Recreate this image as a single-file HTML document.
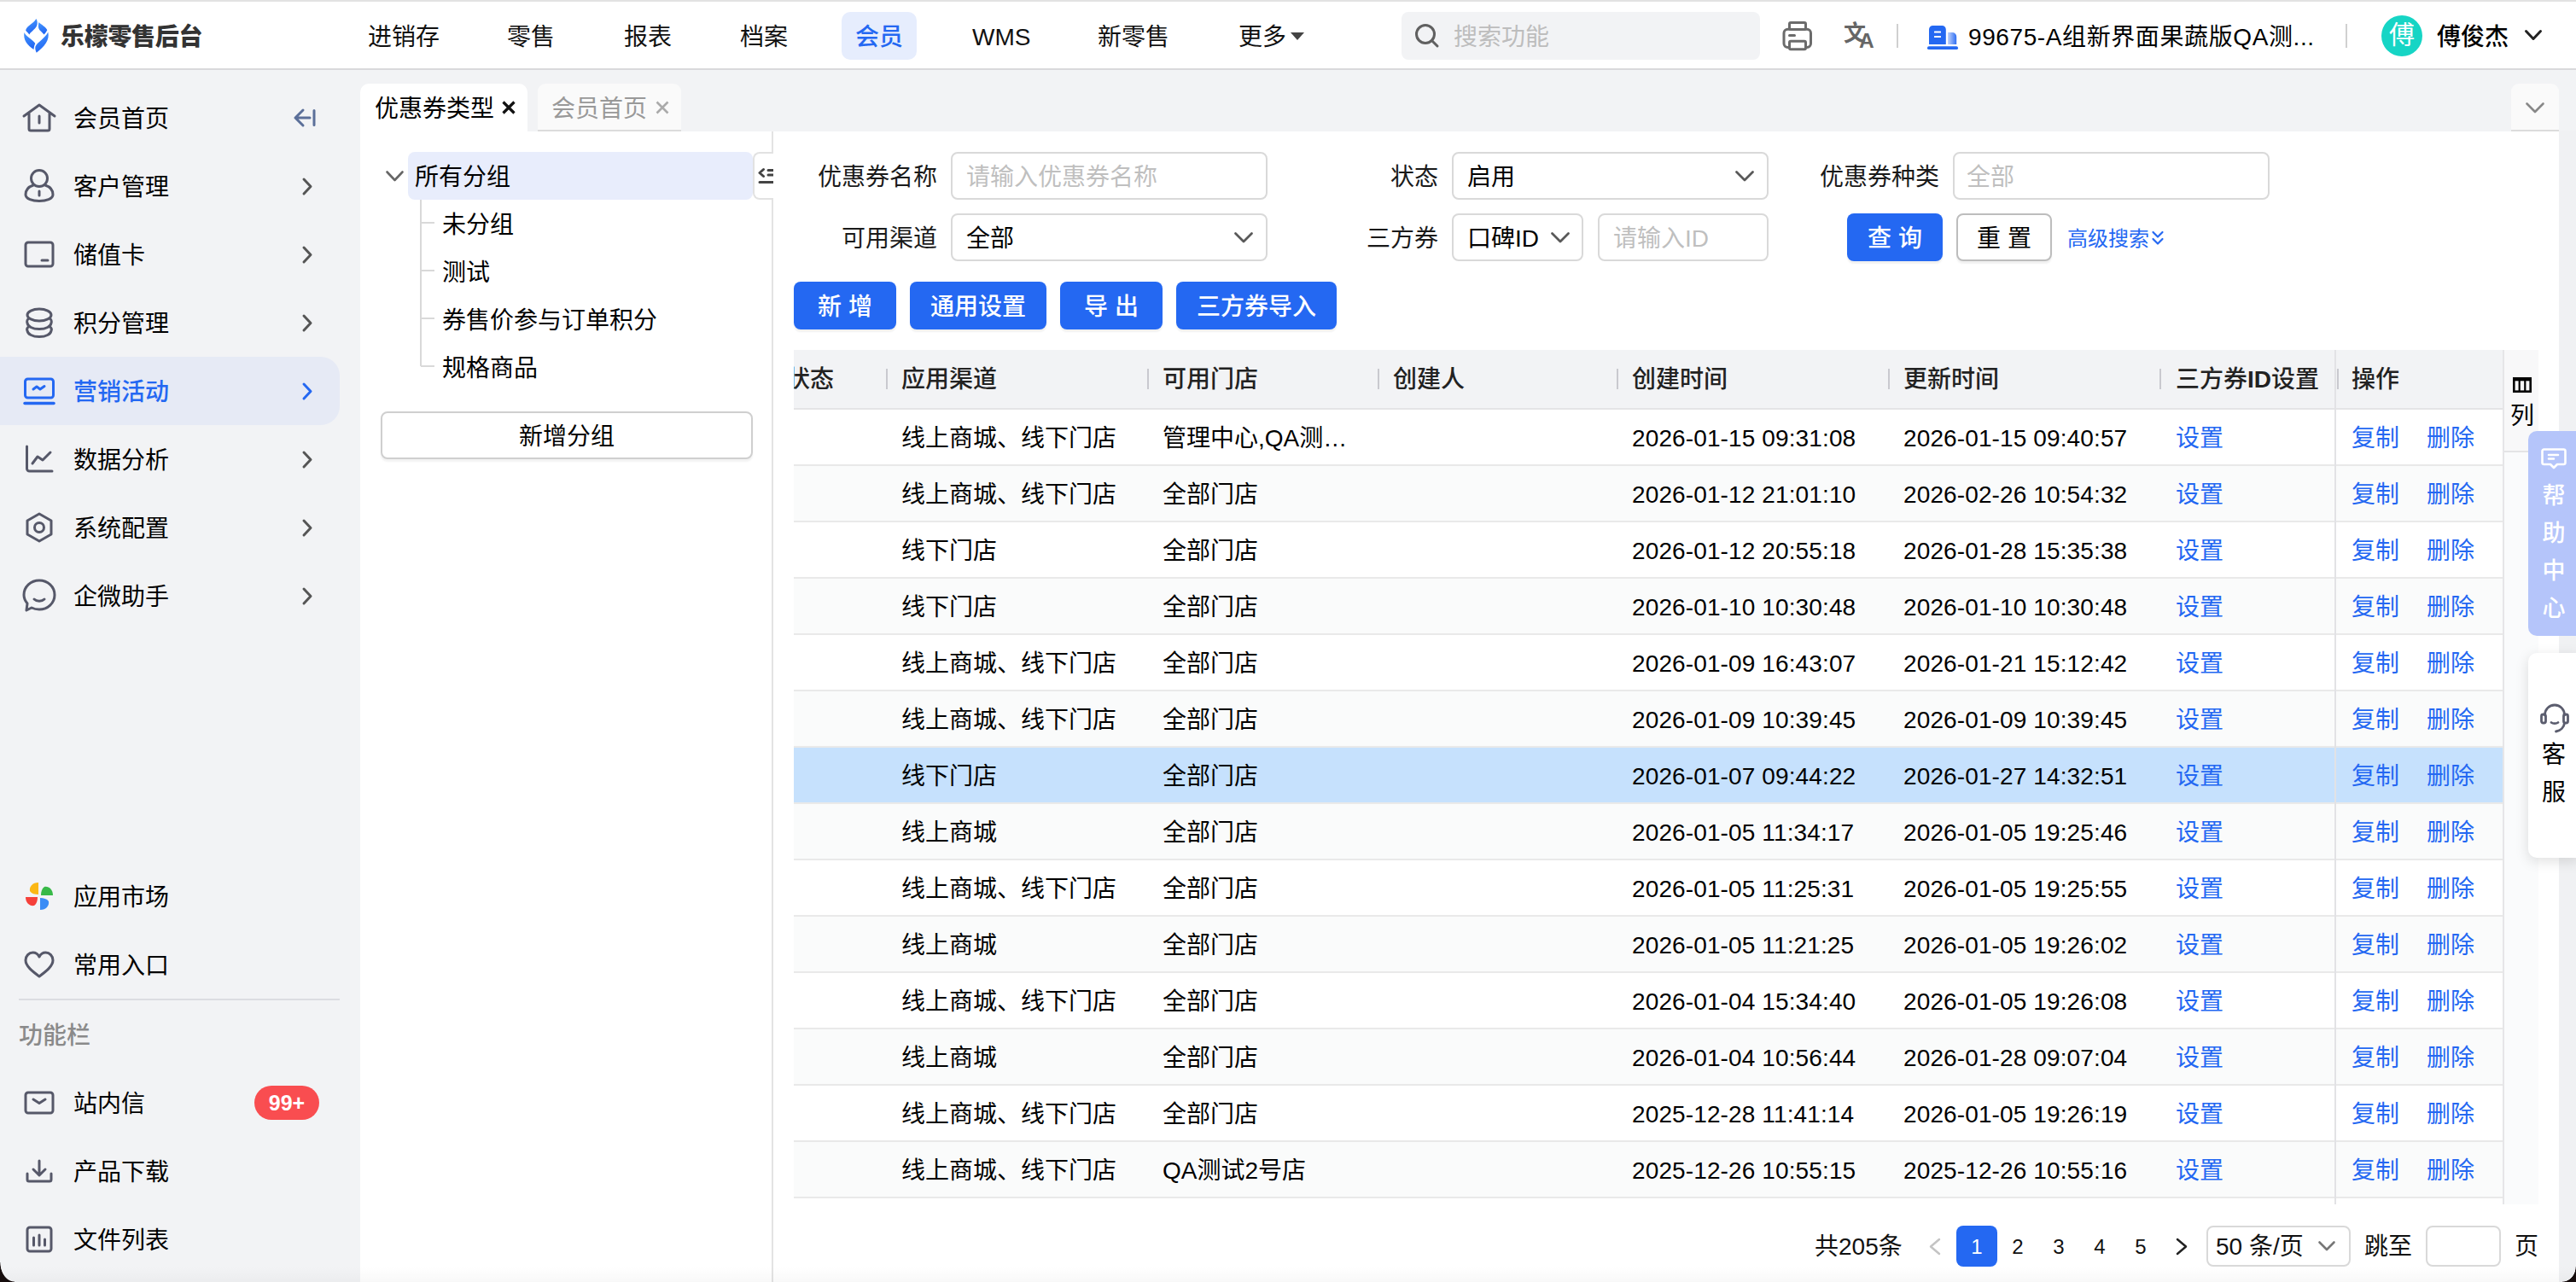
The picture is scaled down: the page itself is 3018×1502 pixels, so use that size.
<!DOCTYPE html>
<html lang="zh-CN">
<head>
<meta charset="utf-8">
<title>乐檬零售后台</title>
<style>
*{box-sizing:border-box;margin:0;padding:0}
html,body{width:3018px;height:1502px;overflow:hidden;background:#f2f3f5}
body{position:relative;font-family:"Liberation Sans","Noto Sans CJK SC",sans-serif;font-size:28px;color:#000;line-height:1}
.abs{position:absolute}
.t{position:absolute;white-space:nowrap;line-height:40px;height:40px;margin-top:2px}
svg{position:absolute;overflow:visible}
/* header */
#topstrip{left:0;top:0;width:3018px;height:2px;background:#e2e2e2}
#header{left:0;top:2px;width:3018px;height:78px;background:#fff}
#hline{left:0;top:80px;width:3018px;height:2px;background:#d9d9db}
.nav{font-size:28px;color:#111}
/* sidebar */
.sb{font-size:28px;color:#000;left:86px}
.chev{left:352px}
/* content */
#panel{left:422px;top:154px;width:2576px;height:1348px;background:#fff}
.lbl{font-size:28px;color:#1a1a1a;text-align:right}
.inp{position:absolute;height:56px;border:2px solid #d9d9d9;border-radius:8px;background:#fff;font-size:28px;line-height:56px;padding-left:16px;white-space:nowrap;color:#000}
.ph{color:#bfbfbf}
.th{font-weight:500;color:#222}.th b{font-weight:700}
.dt{letter-spacing:0.12px}
.lk{color:#2468f2}
.btn{position:absolute;font-weight:500;height:56px;border-radius:8px;background:#2468f2;color:#fff;font-size:28px;line-height:60px;text-align:center;white-space:nowrap;box-shadow:0 3px 2px rgba(0,0,0,.06)}
</style>
</head>
<body>
<div class="abs" id="topstrip"></div>
<div class="abs" id="header"></div>
<div class="abs" id="hline"></div>

<!-- HEADER-CONTENT -->
<svg id="logo" style="left:28px;top:22px" width="30" height="40" viewBox="0 0 30 40">
<defs><linearGradient id="lg1" x1="0" y1="0" x2="0.300" y2="1"><stop offset="0" stop-color="#4a9bff"/><stop offset="1" stop-color="#2267f3"/></linearGradient>
<linearGradient id="lg2" x1="0" y1="0" x2="0.300" y2="1"><stop offset="0" stop-color="#4596fd"/><stop offset="1" stop-color="#2369f4"/></linearGradient></defs>
<path d="M14.300 0 C15.800 2 15.800 4.500 15.600 6.500 C14.500 12 9 14 6.300 18.400 C5 16.500 3 15 2.100 13.500 C3.500 8 11.500 5.500 14.300 0Z" fill="url(#lg1)"/>
<path d="M17.500 3.900 C20.500 7 26 9.500 27.300 13.300 C26.500 15 25 17 23.600 18.400 C21.500 15.500 17.800 13.500 17.100 10.400 C16.800 8 17 6 17.500 3.900Z" fill="url(#lg1)"/>
<path d="M0.400 16 C3 21.500 10.500 24 13.300 29 C12.300 31 11.700 33.500 11.500 36 C4 31 -1 25 0.400 16Z" fill="url(#lg2)"/>
<path d="M28.300 15.600 C30.500 25 24 33 14.800 39.800 C13.600 37.500 13 35 13.400 32.800 C15.500 27.500 25 23 28.300 15.600Z" fill="url(#lg2)"/>
</svg>
<div class="t " style="left:71px;top:22px;font-weight:900;font-size:28px;color:#333;letter-spacing:-0.3px">乐檬零售后台</div>
<div class="abs" style="left:986px;top:14px;width:88px;height:56px;border-radius:10px;background:#e6edfd"></div>
<div class="t nav" style="left:431px;top:22px;">进销存</div>
<div class="t nav" style="left:594px;top:22px;">零售</div>
<div class="t nav" style="left:731px;top:22px;">报表</div>
<div class="t nav" style="left:867px;top:22px;">档案</div>
<div class="t nav" style="left:1139px;top:22px;">WMS</div>
<div class="t nav" style="left:1286px;top:22px;">新零售</div>
<div class="t nav" style="left:1451px;top:22px;">更多</div>
<div class="t nav" style="left:1002px;top:22px;color:#2468f2;font-weight:500">会员</div>
<div class="abs" style="left:1512px;top:38px;width:0;height:0;border-left:8.5px solid transparent;border-right:8.5px solid transparent;border-top:9px solid #444"></div>
<div class="abs" style="left:1642px;top:14px;width:420px;height:56px;border-radius:8px;background:#f2f3f5"></div>
<svg style="left:1657px;top:27px" width="30" height="30" viewBox="0 0 30 30" fill="none" stroke="#606060" stroke-width="3"><circle cx="13" cy="13" r="10.5"/><path d="M20.5 20.5L27 27" stroke-linecap="round"/></svg>
<div class="t " style="left:1703px;top:22px;color:#bdbdbd;font-size:28px">搜索功能</div>
<svg style="left:2088px;top:24px" width="36" height="36" viewBox="0 0 36 36" fill="none" stroke="#6b6b6b" stroke-width="3" stroke-linejoin="round">
<rect x="2" y="10.300" width="31.500" height="21.200" rx="4.500"/>
<rect x="8.500" y="2.500" width="19" height="8" rx="1.500" fill="#fff"/>
<rect x="8.500" y="24.300" width="19" height="9.400" rx="1.500" fill="#fff"/>
<path d="M8.500 17.500h6" stroke-linecap="round"/></svg>
<div class="t" style="left:2160px;top:23px;font-size:26px;font-weight:700;color:#666;line-height:28px;height:28px">文</div>
<div class="t" style="left:2178px;top:32px;font-size:24.500px;font-weight:700;color:#666;line-height:28px;height:28px">A</div>
<div class="abs" style="left:2222px;top:28px;width:2px;height:28px;background:#d0d0d0"></div>
<svg style="left:2258px;top:30px" width="36" height="28" viewBox="0 0 36 28">
<defs><linearGradient id="bg2" x1="0" y1="0" x2="1" y2="0"><stop offset="0" stop-color="#c3d4fb"/><stop offset="1" stop-color="#2e6ef3"/></linearGradient></defs>
<path d="M2 4.500a4.500 4.500 0 0 1 4.500-4.500h10.800a4.500 4.500 0 0 1 4.500 4.500v17.500H2z" fill="#2468f2"/>
<path d="M24 8h5.200a5 5 0 0 1 5 5v9H24z" fill="url(#bg2)"/>
<rect x="0" y="24.300" width="36" height="3.700" rx="1.850" fill="#2468f2"/>
<rect x="8" y="6.500" width="8" height="2" rx="0.500" fill="#fff"/><rect x="8" y="12" width="8" height="2" rx="0.500" fill="#fff"/></svg>
<div class="t " style="left:2306px;top:22px;font-size:28px;color:#000;letter-spacing:0.6px">99675-A组新界面果蔬版QA测...</div>
<div class="abs" style="left:2748px;top:28px;width:2px;height:28px;background:#d0d0d0"></div>
<div class="abs" style="left:2790px;top:18px;width:48px;height:48px;border-radius:50%;background:#16d5c5;color:#fff;font-size:30px;line-height:46px;text-align:center">傅</div>
<div class="t " style="left:2855px;top:22px;font-weight:500;color:#000">傅俊杰</div>
<svg style="left:2958px;top:35px" width="20" height="13" viewBox="0 0 20 13" fill="none" stroke="#222" stroke-width="3" stroke-linecap="round" stroke-linejoin="round"><path d="M1.5 1.5L10 10.5L18.5 1.5"/></svg>

<!-- SIDEBAR -->
<div class="abs" style="left:0;top:418px;width:398px;height:80px;border-radius:0 22px 22px 0;background:#e6eaf5"></div>
<div class="t sb" style="left:86px;top:118px;">会员首页</div>
<div class="t sb" style="left:86px;top:198px;">客户管理</div>
<svg style="left:354px;top:208px" width="12" height="21" viewBox="0 0 12 21" fill="none" stroke="#555" stroke-width="3" stroke-linecap="round" stroke-linejoin="round"><path d="M2 2L10 10.500L2 19"/></svg>
<div class="t sb" style="left:86px;top:278px;">储值卡</div>
<svg style="left:354px;top:288px" width="12" height="21" viewBox="0 0 12 21" fill="none" stroke="#555" stroke-width="3" stroke-linecap="round" stroke-linejoin="round"><path d="M2 2L10 10.500L2 19"/></svg>
<div class="t sb" style="left:86px;top:358px;">积分管理</div>
<svg style="left:354px;top:368px" width="12" height="21" viewBox="0 0 12 21" fill="none" stroke="#555" stroke-width="3" stroke-linecap="round" stroke-linejoin="round"><path d="M2 2L10 10.500L2 19"/></svg>
<div class="t sb" style="left:86px;top:438px;color:#2468f2;font-weight:500">营销活动</div>
<svg style="left:354px;top:448px" width="12" height="21" viewBox="0 0 12 21" fill="none" stroke="#2468f2" stroke-width="3" stroke-linecap="round" stroke-linejoin="round"><path d="M2 2L10 10.500L2 19"/></svg>
<div class="t sb" style="left:86px;top:518px;">数据分析</div>
<svg style="left:354px;top:528px" width="12" height="21" viewBox="0 0 12 21" fill="none" stroke="#555" stroke-width="3" stroke-linecap="round" stroke-linejoin="round"><path d="M2 2L10 10.500L2 19"/></svg>
<div class="t sb" style="left:86px;top:598px;">系统配置</div>
<svg style="left:354px;top:608px" width="12" height="21" viewBox="0 0 12 21" fill="none" stroke="#555" stroke-width="3" stroke-linecap="round" stroke-linejoin="round"><path d="M2 2L10 10.500L2 19"/></svg>
<div class="t sb" style="left:86px;top:678px;">企微助手</div>
<svg style="left:354px;top:688px" width="12" height="21" viewBox="0 0 12 21" fill="none" stroke="#555" stroke-width="3" stroke-linecap="round" stroke-linejoin="round"><path d="M2 2L10 10.500L2 19"/></svg>
<svg style="left:344px;top:126px" width="26" height="24" viewBox="0 0 26 24" fill="none" stroke="#5b6f99" stroke-width="3" stroke-linecap="round" stroke-linejoin="round"><path d="M11 3L2 12L11 21M2 12H19M24 3.500V20.500"/></svg>
<svg style="left:26px;top:121px" width="40" height="34" viewBox="0 0 40 34" fill="none" stroke="#565869" stroke-width="3" stroke-linecap="round" stroke-linejoin="round" ><path d="M2 15L20 2L38 15M8 12V30a2 2 0 0 0 2 2H30a2 2 0 0 0 2-2V12M20 15V23"/></svg>
<svg style="left:28px;top:198px" width="36" height="40" viewBox="0 0 36 40" fill="none" stroke="#565869" stroke-width="3" stroke-linecap="round" stroke-linejoin="round" ><circle cx="18" cy="11" r="9.5"/><path d="M11 19C5 21 2 25 2 30C2 35 10 37.5 18 37.5C26 37.5 34 35 34 30C34 25 31 21 25 19M18 26V31"/></svg>
<svg style="left:28px;top:282px" width="36" height="32" viewBox="0 0 36 32" fill="none" stroke="#565869" stroke-width="3" stroke-linecap="round" stroke-linejoin="round" ><rect x="2" y="2" width="32" height="28" rx="3"/><path d="M21 23H28"/></svg>
<svg style="left:30px;top:360px" width="32" height="36" viewBox="0 0 32 36" fill="none" stroke="#565869" stroke-width="3" stroke-linecap="round" stroke-linejoin="round" ><ellipse cx="16" cy="9" rx="14" ry="7"/><path d="M3.200 13.500C1.500 15 1.500 17.500 2 18.500C2.500 22.500 8 25.500 16 25.500C24 25.500 29.500 22.500 30 18.500C30.500 17.500 30.500 15 28.800 13.500M3.200 23C1.500 24.500 1.500 26.500 2 27.500C2.500 31.500 8 34.500 16 34.500C24 34.500 29.500 31.500 30 27.500C30.500 26.500 30.500 24.500 28.800 23"/></svg>
<svg style="left:27px;top:442px" width="38" height="32" viewBox="0 0 38 32" fill="none" stroke="#2468f2" stroke-width="3" stroke-linecap="round" stroke-linejoin="round" ><rect x="2.5" y="2" width="33" height="22" rx="3"/><path d="M2 30.5H36" stroke-width="3.5"/><path d="M12 14L16 11L20 14L25 10.5"/></svg>
<svg style="left:29px;top:521px" width="34" height="34" viewBox="0 0 34 34" fill="none" stroke="#565869" stroke-width="3" stroke-linecap="round" stroke-linejoin="round" ><path d="M2.5 2V28a3 3 0 0 0 3 3H32M9 22L15 14L21 18L30 9"/></svg>
<svg style="left:29px;top:600px" width="34" height="36" viewBox="0 0 34 36" fill="none" stroke="#565869" stroke-width="3" stroke-linecap="round" stroke-linejoin="round" ><path d="M17 2L31 10V26L17 34L3 26V10Z"/><circle cx="17" cy="18" r="5.5"/></svg>
<svg style="left:26px;top:678px" width="40" height="40" viewBox="0 0 40 40" fill="none" stroke="#565869" stroke-width="3" stroke-linecap="round" stroke-linejoin="round" ><path d="M20 2C30 2 38 9.5 38 19C38 28.500 30 36 20 36C17 36 14 35.500 11 34L5 37L6 29C3.500 26 2 22.500 2 19C2 9.500 10 2 20 2Z"/><path d="M14 24C17 27 23 27 26 24"/></svg>
<div class="t sb" style="left:86px;top:1030px;">应用市场</div>
<div class="t sb" style="left:86px;top:1110px;">常用入口</div>
<div class="abs" style="left:22px;top:1170px;width:376px;height:2px;background:#dcdde1"></div>
<div class="t " style="left:22px;top:1192px;font-size:28px;color:#8a8a8a;font-weight:500">功能栏</div>
<div class="t sb" style="left:86px;top:1272px;">站内信</div>
<div class="t sb" style="left:86px;top:1352px;">产品下载</div>
<div class="t sb" style="left:86px;top:1432px;">文件列表</div>
<div class="abs" style="left:298px;top:1272px;width:76px;height:40px;border-radius:20px;background:#f94d50;color:#fff;font-size:25px;font-weight:700;line-height:40px;text-align:center">99+</div>
<svg style="left:29px;top:1033px" width="34" height="34" viewBox="0 0 34 34" stroke="none">
<path d="M16 15V1C9 1 5 6 6 11C8 14 12 15 16 15Z" fill="#fbb715"/>
<path d="M19 16H33C33 9 28 5 23 6C20 8 19 12 19 16Z" fill="#38b948"/>
<path d="M18 19V33C25 33 29 28 28 23C26 20 22 19 18 19Z" fill="#3b8cf5"/>
<path d="M15 18H1C1 25 6 29 11 28C14 26 15 22 15 18Z" fill="#f5403a"/>
</svg>
<svg style="left:28px;top:1114px" width="36" height="32" viewBox="0 0 36 32" fill="none" stroke="#565869" stroke-width="3" stroke-linecap="round" stroke-linejoin="round" ><path d="M18 30C10 24 2 18 2 11C2 6 6 2 10.500 2C14 2 16.500 4 18 7C19.500 4 22 2 25.500 2C30 2 34 6 34 11C34 18 26 24 18 30Z"/></svg>
<svg style="left:28px;top:1278px" width="36" height="28" viewBox="0 0 36 28" fill="none" stroke="#565869" stroke-width="3" stroke-linecap="round" stroke-linejoin="round" ><rect x="2" y="2" width="32" height="24" rx="3"/><path d="M11 10L18 14.500L25 10"/></svg>
<svg style="left:30px;top:1358px" width="32" height="28" viewBox="0 0 32 28" fill="none" stroke="#565869" stroke-width="3" stroke-linecap="round" stroke-linejoin="round" ><path d="M16 2V18M9 12L16 19L23 12M2 17V24a2 2 0 0 0 2 2H28a2 2 0 0 0 2-2V17"/></svg>
<svg style="left:30px;top:1436px" width="32" height="32" viewBox="0 0 32 32" fill="none" stroke="#565869" stroke-width="3" stroke-linecap="round" stroke-linejoin="round" ><rect x="2" y="2" width="28" height="28" rx="3"/><path d="M9.500 14V23M16 11V23M22.500 16V23"/></svg>

<div class="abs" id="panel"></div>

<!-- TABS -->
<div class="abs" style="left:422px;top:98px;width:196px;height:58px;border-radius:10px 10px 0 0;background:#fff"></div>
<div class="abs" style="left:630px;top:98px;width:168px;height:56px;border-radius:9px 9px 0 0;background:#fafafa;border-bottom:2px solid #dcdcdc"></div>
<div class="t " style="left:439px;top:106px;color:#000">优惠券类型</div>
<svg style="left:588px;top:118px" width="16" height="16" viewBox="0 0 16 16" stroke="#111" stroke-width="3.2" fill="none"><path d="M1.500 1.500L14.500 14.500M14.500 1.500L1.500 14.500"/></svg>
<div class="t " style="left:646px;top:106px;color:#999">会员首页</div>
<svg style="left:768px;top:118px" width="16" height="16" viewBox="0 0 16 16" stroke="#aaa" stroke-width="2.600" fill="none"><path d="M1.500 1.500L14.500 14.500M14.500 1.500L1.500 14.500"/></svg>
<div class="abs" style="left:2942px;top:98px;width:56px;height:56px;border-radius:9px 9px 0 0;background:#fafafa;border-bottom:2px solid #dcdcdc"></div>
<svg style="left:2959px;top:120px" width="22" height="13" viewBox="0 0 22 13" fill="none" stroke="#888" stroke-width="2.600" stroke-linecap="round" stroke-linejoin="round"><path d="M1.500 1.500L11 11L20.500 1.500"/></svg>

<!-- TREE -->
<div class="abs" style="left:904px;top:154px;width:2px;height:1348px;background:#e3e3e3"></div>
<div class="abs" style="left:478px;top:178px;width:404px;height:56px;border-radius:8px;background:#e8edfc"></div>
<svg style="left:452px;top:200px" width="21" height="13" viewBox="0 0 21 13" fill="none" stroke="#666" stroke-width="2.600" stroke-linecap="round" stroke-linejoin="round"><path d="M1.500 1.500L10.500 11L19.500 1.500"/></svg>
<div class="t " style="left:486px;top:186px;">所有分组</div>
<div class="t " style="left:518px;top:242px;">未分组</div>
<div class="abs" style="left:493px;top:260px;width:16px;height:2px;background:#d9d9d9"></div>
<div class="t " style="left:518px;top:298px;">测试</div>
<div class="abs" style="left:493px;top:316px;width:16px;height:2px;background:#d9d9d9"></div>
<div class="t " style="left:518px;top:354px;">券售价参与订单积分</div>
<div class="abs" style="left:493px;top:372px;width:16px;height:2px;background:#d9d9d9"></div>
<div class="t " style="left:518px;top:410px;">规格商品</div>
<div class="abs" style="left:493px;top:428px;width:16px;height:2px;background:#d9d9d9"></div>
<div class="abs" style="left:492px;top:234px;width:2px;height:195px;background:#d9d9d9"></div>
<div class="abs" style="left:446px;top:482px;width:436px;height:56px;border:2px solid #cfcfcf;border-radius:8px;background:#fff;box-shadow:0 3px 2px rgba(0,0,0,.05);text-align:center;line-height:56px;font-size:28px">新增分组</div>
<div class="abs" style="left:882px;top:178px;width:24px;height:56px;border:2px solid #e2e2e2;border-right:none;border-radius:8px 0 0 8px;background:#fff"></div>
<svg style="left:888px;top:196px;overflow:hidden" width="18" height="20" viewBox="0 0 18 20" fill="none" stroke="#444" stroke-width="3" stroke-linecap="round" stroke-linejoin="round"><path d="M6.500 2.500L2 6.500L6.500 10.500M12 3.500H20M12 9H20M2 17.500H20"/></svg>

<!-- FILTER -->
<div class="t lbl" style="right:1920px;top:186px;">优惠券名称</div>
<div class="inp" style="left:1114px;top:178px;width:371px"><span class="ph">请输入优惠券名称</span></div>
<div class="t lbl" style="right:1333px;top:186px;">状态</div>
<div class="inp" style="left:1701px;top:178px;width:371px">启用</div>
<svg style="left:2033px;top:200px" width="22" height="13" viewBox="0 0 22 13" fill="none" stroke="#595959" stroke-width="2.800" stroke-linecap="round" stroke-linejoin="round"><path d="M1.500 1.500L11 11L20.500 1.500"/></svg>
<div class="t lbl" style="right:746px;top:186px;">优惠券种类</div>
<div class="inp" style="left:2288px;top:178px;width:371px;padding-left:14px"><span class="ph">全部</span></div>
<div class="t lbl" style="right:1920px;top:258px;">可用渠道</div>
<div class="inp" style="left:1114px;top:250px;width:371px">全部</div>
<svg style="left:1446px;top:272px" width="22" height="13" viewBox="0 0 22 13" fill="none" stroke="#595959" stroke-width="2.800" stroke-linecap="round" stroke-linejoin="round"><path d="M1.500 1.500L11 11L20.500 1.500"/></svg>
<div class="t lbl" style="right:1333px;top:258px;">三方券</div>
<div class="inp" style="left:1701px;top:250px;width:154px">口碑ID</div>
<svg style="left:1817px;top:272px" width="22" height="13" viewBox="0 0 22 13" fill="none" stroke="#595959" stroke-width="2.800" stroke-linecap="round" stroke-linejoin="round"><path d="M1.500 1.500L11 11L20.500 1.500"/></svg>
<div class="inp" style="left:1872px;top:250px;width:200px"><span class="ph">请输入ID</span></div>
<div class="btn" style="left:2164px;top:250px;width:112px">查 询</div>
<div class="btn" style="left:2292px;top:250px;width:112px;background:#fff;color:#000;font-weight:400;border:2px solid #bdbdbd;line-height:56px">重 置</div>
<div class="t " style="left:2422px;top:258px;color:#2468f2;font-size:24px">高级搜索</div>
<svg style="left:2521px;top:270px" width="14" height="18" viewBox="0 0 14 18" fill="none" stroke="#2468f2" stroke-width="2.200" stroke-linecap="round" stroke-linejoin="round"><path d="M1.500 2L7 7.500L12.500 2M1.500 10L7 15.500L12.500 10"/></svg>
<div class="btn" style="left:930px;top:330px;width:120px">新 增</div>
<div class="btn" style="left:1066px;top:330px;width:160px">通用设置</div>
<div class="btn" style="left:1242px;top:330px;width:120px">导 出</div>
<div class="btn" style="left:1378px;top:330px;width:188px">三方券导入</div>

<!-- TABLE -->
<div class="abs" style="left:930px;top:410px;width:2002px;height:70px;background:#f2f3f5;border-bottom:2px solid #e4e4e6"></div>
<div class="abs" style="left:930px;top:423px;width:60px;height:40px;overflow:hidden"><div class="t th" style="left:-9px;top:0">状态</div></div>
<div class="t th" style="left:1056px;top:423px;">应用渠道</div>
<div class="t th" style="left:1362px;top:423px;">可用门店</div>
<div class="t th" style="left:1632px;top:423px;">创建人</div>
<div class="t th" style="left:1912px;top:423px;">创建时间</div>
<div class="t th" style="left:2230px;top:423px;">更新时间</div>
<div class="t th" style="left:2549px;top:423px;">三方券<b>ID</b>设置</div>
<div class="t th" style="left:2755px;top:423px;">操作</div>
<div class="abs" style="left:1038px;top:432px;width:2px;height:24px;background:#c9c9cf"></div>
<div class="abs" style="left:1344px;top:432px;width:2px;height:24px;background:#c9c9cf"></div>
<div class="abs" style="left:1614px;top:432px;width:2px;height:24px;background:#c9c9cf"></div>
<div class="abs" style="left:1894px;top:432px;width:2px;height:24px;background:#c9c9cf"></div>
<div class="abs" style="left:2212px;top:432px;width:2px;height:24px;background:#c9c9cf"></div>
<div class="abs" style="left:2530px;top:432px;width:2px;height:24px;background:#c9c9cf"></div>
<div class="abs" style="left:2738px;top:432px;width:2px;height:24px;background:#c9c9cf"></div>
<div class="abs" style="left:930px;top:480px;width:2002px;height:66px;background:#fff;border-bottom:2px solid #e9e9e9"></div>
<div class="t " style="left:1056px;top:492px;">线上商城、线下门店</div>
<div class="t " style="left:1362px;top:492px;">管理中心,QA测…</div>
<div class="t dt" style="left:1912px;top:492px;">2026-01-15 09:31:08</div>
<div class="t dt" style="left:2230px;top:492px;">2026-01-15 09:40:57</div>
<div class="t lk" style="left:2549px;top:492px;">设置</div>
<div class="t lk" style="left:2755px;top:492px;">复制</div>
<div class="t lk" style="left:2843px;top:492px;">删除</div>
<div class="abs" style="left:930px;top:546px;width:2002px;height:66px;background:#fafbfb;border-bottom:2px solid #e9e9e9"></div>
<div class="t " style="left:1056px;top:558px;">线上商城、线下门店</div>
<div class="t " style="left:1362px;top:558px;">全部门店</div>
<div class="t dt" style="left:1912px;top:558px;">2026-01-12 21:01:10</div>
<div class="t dt" style="left:2230px;top:558px;">2026-02-26 10:54:32</div>
<div class="t lk" style="left:2549px;top:558px;">设置</div>
<div class="t lk" style="left:2755px;top:558px;">复制</div>
<div class="t lk" style="left:2843px;top:558px;">删除</div>
<div class="abs" style="left:930px;top:612px;width:2002px;height:66px;background:#fff;border-bottom:2px solid #e9e9e9"></div>
<div class="t " style="left:1056px;top:624px;">线下门店</div>
<div class="t " style="left:1362px;top:624px;">全部门店</div>
<div class="t dt" style="left:1912px;top:624px;">2026-01-12 20:55:18</div>
<div class="t dt" style="left:2230px;top:624px;">2026-01-28 15:35:38</div>
<div class="t lk" style="left:2549px;top:624px;">设置</div>
<div class="t lk" style="left:2755px;top:624px;">复制</div>
<div class="t lk" style="left:2843px;top:624px;">删除</div>
<div class="abs" style="left:930px;top:678px;width:2002px;height:66px;background:#fafbfb;border-bottom:2px solid #e9e9e9"></div>
<div class="t " style="left:1056px;top:690px;">线下门店</div>
<div class="t " style="left:1362px;top:690px;">全部门店</div>
<div class="t dt" style="left:1912px;top:690px;">2026-01-10 10:30:48</div>
<div class="t dt" style="left:2230px;top:690px;">2026-01-10 10:30:48</div>
<div class="t lk" style="left:2549px;top:690px;">设置</div>
<div class="t lk" style="left:2755px;top:690px;">复制</div>
<div class="t lk" style="left:2843px;top:690px;">删除</div>
<div class="abs" style="left:930px;top:744px;width:2002px;height:66px;background:#fff;border-bottom:2px solid #e9e9e9"></div>
<div class="t " style="left:1056px;top:756px;">线上商城、线下门店</div>
<div class="t " style="left:1362px;top:756px;">全部门店</div>
<div class="t dt" style="left:1912px;top:756px;">2026-01-09 16:43:07</div>
<div class="t dt" style="left:2230px;top:756px;">2026-01-21 15:12:42</div>
<div class="t lk" style="left:2549px;top:756px;">设置</div>
<div class="t lk" style="left:2755px;top:756px;">复制</div>
<div class="t lk" style="left:2843px;top:756px;">删除</div>
<div class="abs" style="left:930px;top:810px;width:2002px;height:66px;background:#fafbfb;border-bottom:2px solid #e9e9e9"></div>
<div class="t " style="left:1056px;top:822px;">线上商城、线下门店</div>
<div class="t " style="left:1362px;top:822px;">全部门店</div>
<div class="t dt" style="left:1912px;top:822px;">2026-01-09 10:39:45</div>
<div class="t dt" style="left:2230px;top:822px;">2026-01-09 10:39:45</div>
<div class="t lk" style="left:2549px;top:822px;">设置</div>
<div class="t lk" style="left:2755px;top:822px;">复制</div>
<div class="t lk" style="left:2843px;top:822px;">删除</div>
<div class="abs" style="left:930px;top:876px;width:2002px;height:66px;background:#c6e1fd;border-bottom:2px solid #e9e9e9"></div>
<div class="t " style="left:1056px;top:888px;">线下门店</div>
<div class="t " style="left:1362px;top:888px;">全部门店</div>
<div class="t dt" style="left:1912px;top:888px;">2026-01-07 09:44:22</div>
<div class="t dt" style="left:2230px;top:888px;">2026-01-27 14:32:51</div>
<div class="t lk" style="left:2549px;top:888px;">设置</div>
<div class="t lk" style="left:2755px;top:888px;">复制</div>
<div class="t lk" style="left:2843px;top:888px;">删除</div>
<div class="abs" style="left:930px;top:942px;width:2002px;height:66px;background:#fafbfb;border-bottom:2px solid #e9e9e9"></div>
<div class="t " style="left:1056px;top:954px;">线上商城</div>
<div class="t " style="left:1362px;top:954px;">全部门店</div>
<div class="t dt" style="left:1912px;top:954px;">2026-01-05 11:34:17</div>
<div class="t dt" style="left:2230px;top:954px;">2026-01-05 19:25:46</div>
<div class="t lk" style="left:2549px;top:954px;">设置</div>
<div class="t lk" style="left:2755px;top:954px;">复制</div>
<div class="t lk" style="left:2843px;top:954px;">删除</div>
<div class="abs" style="left:930px;top:1008px;width:2002px;height:66px;background:#fff;border-bottom:2px solid #e9e9e9"></div>
<div class="t " style="left:1056px;top:1020px;">线上商城、线下门店</div>
<div class="t " style="left:1362px;top:1020px;">全部门店</div>
<div class="t dt" style="left:1912px;top:1020px;">2026-01-05 11:25:31</div>
<div class="t dt" style="left:2230px;top:1020px;">2026-01-05 19:25:55</div>
<div class="t lk" style="left:2549px;top:1020px;">设置</div>
<div class="t lk" style="left:2755px;top:1020px;">复制</div>
<div class="t lk" style="left:2843px;top:1020px;">删除</div>
<div class="abs" style="left:930px;top:1074px;width:2002px;height:66px;background:#fafbfb;border-bottom:2px solid #e9e9e9"></div>
<div class="t " style="left:1056px;top:1086px;">线上商城</div>
<div class="t " style="left:1362px;top:1086px;">全部门店</div>
<div class="t dt" style="left:1912px;top:1086px;">2026-01-05 11:21:25</div>
<div class="t dt" style="left:2230px;top:1086px;">2026-01-05 19:26:02</div>
<div class="t lk" style="left:2549px;top:1086px;">设置</div>
<div class="t lk" style="left:2755px;top:1086px;">复制</div>
<div class="t lk" style="left:2843px;top:1086px;">删除</div>
<div class="abs" style="left:930px;top:1140px;width:2002px;height:66px;background:#fff;border-bottom:2px solid #e9e9e9"></div>
<div class="t " style="left:1056px;top:1152px;">线上商城、线下门店</div>
<div class="t " style="left:1362px;top:1152px;">全部门店</div>
<div class="t dt" style="left:1912px;top:1152px;">2026-01-04 15:34:40</div>
<div class="t dt" style="left:2230px;top:1152px;">2026-01-05 19:26:08</div>
<div class="t lk" style="left:2549px;top:1152px;">设置</div>
<div class="t lk" style="left:2755px;top:1152px;">复制</div>
<div class="t lk" style="left:2843px;top:1152px;">删除</div>
<div class="abs" style="left:930px;top:1206px;width:2002px;height:66px;background:#fafbfb;border-bottom:2px solid #e9e9e9"></div>
<div class="t " style="left:1056px;top:1218px;">线上商城</div>
<div class="t " style="left:1362px;top:1218px;">全部门店</div>
<div class="t dt" style="left:1912px;top:1218px;">2026-01-04 10:56:44</div>
<div class="t dt" style="left:2230px;top:1218px;">2026-01-28 09:07:04</div>
<div class="t lk" style="left:2549px;top:1218px;">设置</div>
<div class="t lk" style="left:2755px;top:1218px;">复制</div>
<div class="t lk" style="left:2843px;top:1218px;">删除</div>
<div class="abs" style="left:930px;top:1272px;width:2002px;height:66px;background:#fff;border-bottom:2px solid #e9e9e9"></div>
<div class="t " style="left:1056px;top:1284px;">线上商城、线下门店</div>
<div class="t " style="left:1362px;top:1284px;">全部门店</div>
<div class="t dt" style="left:1912px;top:1284px;">2025-12-28 11:41:14</div>
<div class="t dt" style="left:2230px;top:1284px;">2026-01-05 19:26:19</div>
<div class="t lk" style="left:2549px;top:1284px;">设置</div>
<div class="t lk" style="left:2755px;top:1284px;">复制</div>
<div class="t lk" style="left:2843px;top:1284px;">删除</div>
<div class="abs" style="left:930px;top:1338px;width:2002px;height:66px;background:#fafbfb;border-bottom:2px solid #e9e9e9"></div>
<div class="t " style="left:1056px;top:1350px;">线上商城、线下门店</div>
<div class="t " style="left:1362px;top:1350px;">QA测试2号店</div>
<div class="t dt" style="left:1912px;top:1350px;">2025-12-26 10:55:15</div>
<div class="t dt" style="left:2230px;top:1350px;">2025-12-26 10:55:16</div>
<div class="t lk" style="left:2549px;top:1350px;">设置</div>
<div class="t lk" style="left:2755px;top:1350px;">复制</div>
<div class="t lk" style="left:2843px;top:1350px;">删除</div>
<div class="abs" style="left:930px;top:1404px;width:2002px;height:7px;background:#fff"></div>
<div class="abs" style="left:2735px;top:410px;width:2px;height:1001px;background:#e2e2e5"></div>
<div class="abs" style="left:2932px;top:410px;width:42px;height:1001px;background:#fafbfc;border-left:2px solid #e6e6e8"></div>
<div class="abs" style="left:2934px;top:410px;width:40px;height:120px;background:#f8f8f9;border-bottom:2px solid #e4e4e6"></div>
<svg style="left:2944px;top:442px" width="22" height="18" viewBox="0 0 22 18" fill="none" stroke="#000" stroke-width="2.600"><rect x="1.300" y="1.300" width="19.400" height="15.400"/><path d="M7.700 1.300V16.700M14.300 1.300V16.700" stroke-width="2.200"/><path d="M1.300 2.500H20.700" stroke-width="3.600"/></svg>
<div class="t " style="left:2941px;top:466px;font-size:28px">列</div>

<!-- PAGER -->
<div class="t " style="left:2126px;top:1439px;color:#111">共205条</div>
<svg style="left:2260px;top:1450px" width="14" height="21" viewBox="0 0 14 21" fill="none" stroke="#c4c4c4" stroke-width="2.500" stroke-linecap="round" stroke-linejoin="round"><path d="M12 2L2 10.500L12 19"/></svg>
<div class="abs" style="left:2292px;top:1436px;width:48px;height:48px;border-radius:8px;background:#2468f2"></div>
<div class="t " style="left:2286px;width:60px;text-align:center;top:1439px;color:#fff;font-size:24px">1</div>
<div class="t " style="left:2334px;width:60px;text-align:center;top:1439px;color:#111;font-size:24px">2</div>
<div class="t " style="left:2382px;width:60px;text-align:center;top:1439px;color:#111;font-size:24px">3</div>
<div class="t " style="left:2430px;width:60px;text-align:center;top:1439px;color:#111;font-size:24px">4</div>
<div class="t " style="left:2478px;width:60px;text-align:center;top:1439px;color:#111;font-size:24px">5</div>
<svg style="left:2549px;top:1450px" width="14" height="21" viewBox="0 0 14 21" fill="none" stroke="#222" stroke-width="2.500" stroke-linecap="round" stroke-linejoin="round"><path d="M2 2L12 10.500L2 19"/></svg>
<div class="abs" style="left:2585px;top:1436px;width:169px;height:48px;border:2px solid #d9d9d9;border-radius:8px;background:#fff"></div>
<div class="t " style="left:2596px;top:1439px;color:#111">50 条/页</div>
<svg style="left:2716px;top:1454px" width="20" height="12" viewBox="0 0 20 12" fill="none" stroke="#777" stroke-width="2.600" stroke-linecap="round" stroke-linejoin="round"><path d="M1.500 1.500L10 10L18.500 1.500"/></svg>
<div class="t " style="left:2770px;top:1439px;color:#111">跳至</div>
<div class="abs" style="left:2842px;top:1436px;width:88px;height:48px;border:2px solid #d9d9d9;border-radius:8px;background:#fff"></div>
<div class="t " style="left:2946px;top:1439px;color:#111">页</div>

<!-- FLOAT -->
<div class="abs" style="left:2998px;top:153px;width:20px;height:1349px;background:#f0f1f3"></div>
<div class="abs" style="left:2962px;top:505px;width:56px;height:240px;border-radius:10px 0 0 10px;background:#b5c5fa"></div>
<svg style="left:2977px;top:525px" width="30" height="25" viewBox="0 0 30 25" fill="none" stroke="#fff" stroke-width="2.600" stroke-linecap="round" stroke-linejoin="round"><path d="M3.500 1.500H26.500a2 2 0 0 1 2 2V17a2 2 0 0 1-2 2H19L15 23L11 19H3.500a2 2 0 0 1-2-2V3.500a2 2 0 0 1 2-2Z"/><path d="M9 8H20M9 12.500H15"/></svg>
<div class="t " style="left:2972px;width:40px;text-align:center;top:559px;color:#fff;font-size:27px;font-weight:500">帮</div>
<div class="t " style="left:2972px;width:40px;text-align:center;top:603px;color:#fff;font-size:27px;font-weight:500">助</div>
<div class="t " style="left:2972px;width:40px;text-align:center;top:647px;color:#fff;font-size:27px;font-weight:500">中</div>
<div class="t " style="left:2972px;width:40px;text-align:center;top:691px;color:#fff;font-size:27px;font-weight:500">心</div>
<div class="abs" style="left:2962px;top:765px;width:60px;height:240px;border-radius:10px 0 0 10px;background:#fff;box-shadow:0 4px 16px rgba(0,0,0,.13)"></div>
<svg style="left:2976px;top:824px" width="34" height="35" viewBox="0 0 34 35" fill="none" stroke="#5b5d6e" stroke-width="2.800" stroke-linecap="round" stroke-linejoin="round"><path d="M5.500 14C5.500 7 10.500 2 17 2C23.500 2 28.500 7 28.500 14"/><rect x="1.500" y="13" width="5" height="10" rx="2"/><rect x="27.500" y="13" width="5" height="10" rx="2"/><path d="M28.500 23C28 28 24 32 18.500 33"/><path d="M13 22.500C15 24 19 24 21 22.500"/></svg>
<div class="t " style="left:2972px;width:40px;text-align:center;top:863px;font-size:28px">客</div>
<div class="t " style="left:2972px;width:40px;text-align:center;top:907px;font-size:28px">服</div>

<div class="abs" style="left:0;top:1484px;width:3018px;height:18px;background:linear-gradient(rgba(0,0,0,0),rgba(0,0,0,.028))"></div>
<div class="abs" style="left:0;top:1479px;width:17px;height:23px;background:radial-gradient(ellipse 17px 23px at 100% 0,rgba(0,0,0,0) 96%,#160d0d 100%)"></div>
<div class="abs" style="left:3002px;top:1484px;width:16px;height:18px;background:radial-gradient(ellipse 16px 18px at 0 0,rgba(0,0,0,0) 96%,#160d0d 100%)"></div>
</body>
</html>
